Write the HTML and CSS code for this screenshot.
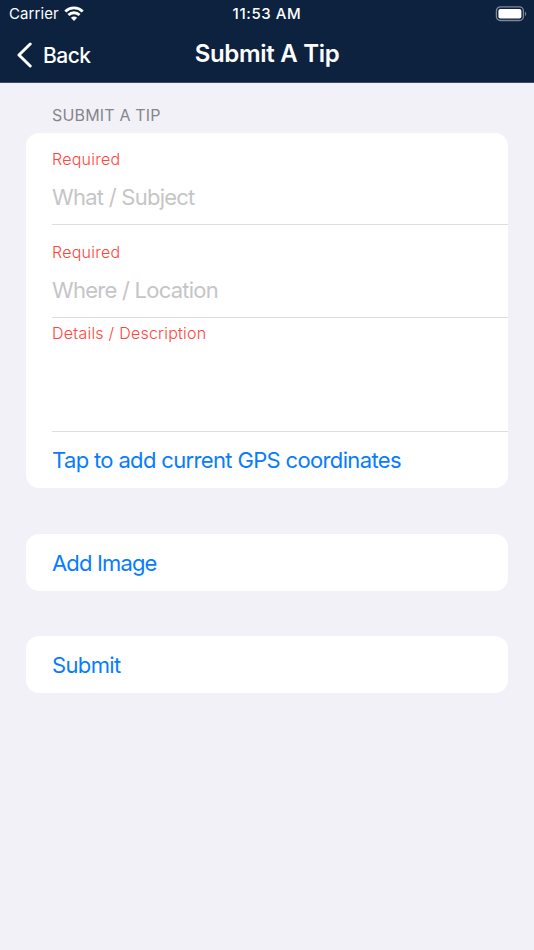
FILE: index.html
```html
<!DOCTYPE html>
<html lang="en">
<head>
  <meta charset="UTF-8">
  <meta name="viewport" content="width=device-width, initial-scale=1.0">
  <title>Submit A Tip</title>
  <link rel="stylesheet" href="styles.css">
</head>
<body>
  <header>
    <div class="status-bar">
      <div class="carrier">
        <span class="carrier-name">Carrier</span>
        <svg class="wifi" width="20" height="16" viewBox="0 0 20 16">
          <path d="M1.3 5.4C6.1 .8 13.9 .8 18.7 5.4" />
          <path d="M4.4 8.9C7.5 6 12.5 6 15.6 8.9" />
          <path class="dot" d="M6.9 11.7C8.6 10.2 11.4 10.2 13.1 11.7L10 14.9Z" />
        </svg>
      </div>
      <span class="time">11:53 AM</span>
      <svg class="battery" width="32" height="16" viewBox="0 0 32 16">
        <rect class="case" x="1.4" y=".9" width="27" height="13.6" rx="4" />
        <rect x="3.4" y="3" width="23" height="9.4" rx="2" />
        <path class="cap" d="M30 5.4C31.6 6.1 31.6 9.3 30 10Z" />
      </svg>
    </div>
    <nav>
      <a class="back" href="#">
        <svg width="16" height="26" viewBox="0 0 16 26">
          <path d="M13.2 2L2 13L13.2 24" />
        </svg>
        <span>Back</span>
      </a>
      <h1>Submit A Tip</h1>
    </nav>
  </header>
  <form id="form" action="">
    <h2>SUBMIT A TIP</h2>
    <div class="card fields">
      <div class="field subject">
        <label for="subject">Required</label>
        <input id="subject" placeholder="What / Subject" autocomplete="off" />
      </div>
      <div class="field location">
        <label for="location">Required</label>
        <input id="location" placeholder="Where / Location" autocomplete="off" />
      </div>
      <div class="field details">
        <label for="details">Details / Description</label>
        <textarea id="details"></textarea>
      </div>
      <button class="gps" type="button">Tap to add current GPS coordinates</button>
    </div>
    <div class="card">
      <button class="image" type="button">Add Image</button>
    </div>
    <div class="card">
      <button class="submit">Submit</button>
    </div>
  </form>
</body>
</html>
```

FILE: styles.css
```css
* {
  box-sizing: border-box;
}
body {
  margin: 0;
  min-height: 100vh;
  background: #f2f1f7;
  font-family: Inter, "Liberation Sans", sans-serif;
}
header {
  height: 83px;
  background: #0c223f;
  border-bottom: 1px solid #3b4b64;
  color: #fff;
}
.status-bar {
  display: grid;
  grid-template-columns: 1fr auto 1fr;
  align-items: center;
  height: 27px;
  padding: 0 7px 0 9px;
  font-size: 15px;
}
.carrier {
  display: flex;
  align-items: center;
  gap: 5px;
}
.carrier-name {
  letter-spacing: 0.1px;
}
.wifi {
  fill: none;
  stroke: #fff;
  stroke-width: 2.8;
}
.wifi .dot {
  fill: #fff;
  stroke: none;
}
.time {
  padding-right: 2px;
  font-weight: 500;
  letter-spacing: 0.6px;
}
.battery {
  justify-self: end;
  fill: #fff;
}
.battery .case {
  fill: none;
  stroke: #7d899a;
  stroke-width: 1.3;
}
.battery .cap {
  fill: #7d899a;
}
nav {
  display: grid;
  grid-template-columns: 1fr auto 1fr;
  align-items: center;
  height: 55px;
  padding: 0 17px;
}
.back {
  display: flex;
  align-items: center;
  gap: 10px;
  color: #fff;
  font-size: 21px;
  font-weight: 500;
  letter-spacing: -0.5px;
  text-decoration: none;
}
.back svg {
  fill: none;
  stroke: #fff;
  stroke-width: 3;
  stroke-linecap: round;
  stroke-linejoin: round;
}
.back span {
  padding-top: 1px;
}
h1 {
  margin: 0;
  padding-bottom: 3px;
  font-size: 24px;
  font-weight: 600;
  letter-spacing: -0.3px;
}
form {
  padding: 22px 26px;
}
h2 {
  margin: 0 26px 8px;
  color: #85858a;
  font-size: 16px;
  font-weight: 400;
  letter-spacing: 0.17px;
  line-height: 20px;
}
.card {
  height: 57px;
  margin-bottom: 45px;
  padding-left: 26px;
  background: #fff;
  border-radius: 13px;
}
.card.fields {
  height: 355px;
  margin-bottom: 46px;
}
.field {
  display: flex;
  flex-direction: column;
  border-bottom: 1px solid #dedee0;
}
.subject {
  height: 92px;
  padding-top: 16px;
}
.location {
  height: 93px;
  padding-top: 17px;
}
.details {
  height: 114px;
  padding-top: 5px;
}
label {
  color: #ff453c;
  font-size: 16px;
  font-weight: 300;
  letter-spacing: 0.24px;
  line-height: 20px;
}
input,
textarea {
  border: none;
  outline: none;
  padding: 0;
  background: none;
  font: 400 22px/28px Inter, "Liberation Sans", sans-serif;
  letter-spacing: -0.75px;
}
input {
  height: 28px;
  margin-top: 14px;
}
input::placeholder {
  color: #c5c5c7;
}
textarea {
  flex-grow: 1;
  resize: none;
}
button {
  display: block;
  width: 100%;
  height: 57px;
  border: none;
  padding: 1px 0 0;
  background: none;
  color: #087cff;
  font: 400 22px/28px Inter, "Liberation Sans", sans-serif;
  letter-spacing: -0.65px;
  text-align: left;
}
.gps {
  height: 56px;
  padding: 0;
}
.image {
  letter-spacing: -0.85px;
}
```
